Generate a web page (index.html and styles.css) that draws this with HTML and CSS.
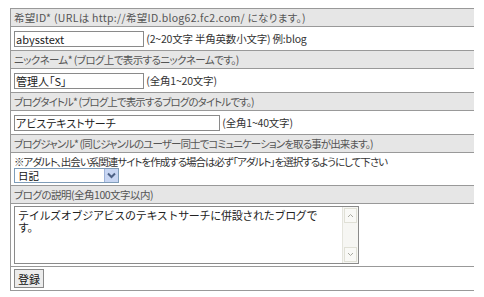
FILE: index.html
```html
<!doctype html>
<html>
<head>
<meta charset="utf-8">
<link rel="stylesheet" href="styles.css">
<title>ブログ作成</title>
</head>
<body>
<form class="regist">
<table class="form-table">
<tr><th class="th-url">希望ID* (URLは http://希望ID.blog62.fc2.com/ になります。)</th></tr>
<tr><td><input class="txt txt-id" type="text" value="abysstext"> <span class="note">(2~20文字 半角英数小文字) 例:blog</span></td></tr>
<tr><th class="th-nick">ニックネーム* (ブログ上で表示するニックネームです。)</th></tr>
<tr><td><input class="txt txt-id" type="text" value="管理人「S」"> <span class="note">(全角1~20文字)</span></td></tr>
<tr><th>ブログタイトル* (ブログ上で表示するブログのタイトルです。)</th></tr>
<tr><td><input class="txt txt-title" type="text" value="アビステキストサーチ"> <span class="note">(全角1~40文字)</span></td></tr>
<tr><th>ブログジャンル* (同じジャンルのユーザー同士でコミュニケーションを取る事が出来ます。)</th></tr>
<tr><td class="genre">
<p class="note note-warn">※アダルト、出会い系関連サイトを作成する場合は必ず「アダルト」を選択するようにして下さい</p>
<div class="select"><span class="select-val">日記</span><span class="select-btn"><svg width="9" height="7" viewBox="0 0 9 7"><path d="M1 1.5 L4.5 5 L8 1.5" fill="none" stroke="#4d6185" stroke-width="2"/></svg></span></div>
</td></tr>
<tr><th class="th-desc">ブログの説明(全角100文字以内)</th></tr>
<tr><td class="desc-cell">
<div class="desc">
<textarea class="desc-text">テイルズオブジアビスのテキストサーチに併設されたブログです。</textarea>
<div class="scroll">
<span class="arrow"><svg width="7" height="5" viewBox="0 0 7 5"><path d="M1 4 L3.5 1.5 L6 4" fill="none" stroke="#a9a9a0" stroke-width="1"/></svg></span>
<span class="arrow"><svg width="7" height="5" viewBox="0 0 7 5"><path d="M1 1 L3.5 3.5 L6 1" fill="none" stroke="#a9a9a0" stroke-width="1"/></svg></span>
</div>
</div>
</td></tr>
<tr><td class="submit-cell"><button class="btn" type="button">登録</button></td></tr>
</table>
</form>
</body>
</html>
```

FILE: styles.css
```css
body {
    margin: 8px 10px;
    background: #fff;
    font-family: "Noto Sans CJK JP", "Liberation Sans", sans-serif;
    font-size: 10.5px;
    color: #333;
    font-feature-settings: "palt";
}
.form-table {
    width: 465px;
    border-collapse: collapse;
    border: 1px solid #999;
}
.form-table th,
.form-table td {
    border-top: 1px solid #999;
    text-align: left;
    padding: 2px 3px;
    line-height: 13px;
}
.form-table th {
    background: #e6e6e6;
    color: #555;
    font-weight: normal;
    height: 13px;
    letter-spacing: -0.9px;
}
.form-table .th-url {
    letter-spacing: 0.3px;
}
.form-table .th-nick {
    letter-spacing: -0.6px;
}
.form-table .th-desc {
    letter-spacing: -0.5px;
}
.form-table td {
    height: 19px;
}
.txt {
    font-family: inherit;
    font-size: 11px;
    color: #222;
    border: 1px solid #8a8a8a;
    padding: 0 1px;
    height: 16px;
    box-sizing: border-box;
    margin: 0;
    vertical-align: middle;
    font-feature-settings: "palt";
}
.txt-id {
    width: 130px;
}
.txt-title {
    width: 206px;
}
.note {
    vertical-align: middle;
    margin: 0;
    letter-spacing: -0.2px;
}
.note-warn {
    letter-spacing: -1px;
}
.genre {
    padding-top: 0;
    padding-bottom: 3px;
}
.select {
    display: flex;
    width: 105px;
    height: 15px;
    border: 1px solid #7f9db9;
    box-sizing: border-box;
}
.select-val {
    flex: 1;
    padding-left: 3px;
    line-height: 13px;
    color: #111;
}
.select-btn {
    width: 13px;
    background: #c8d6f3;
    border-left: 1px solid #9fb3d9;
    display: flex;
    align-items: center;
    justify-content: center;
}
.desc-cell {
    padding-top: 5px;
    padding-bottom: 2px;
}
.desc {
    display: flex;
    width: 345px;
    height: 58px;
    border: 1px solid #8a8a8a;
    box-sizing: border-box;
}
.desc-text {
    flex: 1;
    border: 0;
    resize: none;
    overflow: hidden;
    font-family: "Noto Sans CJK JP", sans-serif;
    font-size: 11px;
    line-height: 12px;
    letter-spacing: -0.3px;
    font-feature-settings: normal;
    color: #222;
    padding: 2px 8px 2px 3px;
    margin: 0;
}
.scroll {
    width: 15px;
    background: #f6f6f3;
    border-left: 1px solid #e4e4dc;
    display: flex;
    flex-direction: column;
    justify-content: space-between;
    padding: 1px 0;
}
.arrow {
    height: 13px;
    margin: 0 1px;
    border: 1px solid #e0e0d6;
    background: #f9f9f6;
    display: flex;
    align-items: center;
    justify-content: center;
}
.submit-cell {
    padding: 3px 2px 3px;
}
.btn {
    font-family: inherit;
    font-size: 11px;
    color: #111;
    background: #ececec;
    border: 1px solid #888;
    padding: 0 3px;
    height: 19px;
    margin: 0;
}
```
